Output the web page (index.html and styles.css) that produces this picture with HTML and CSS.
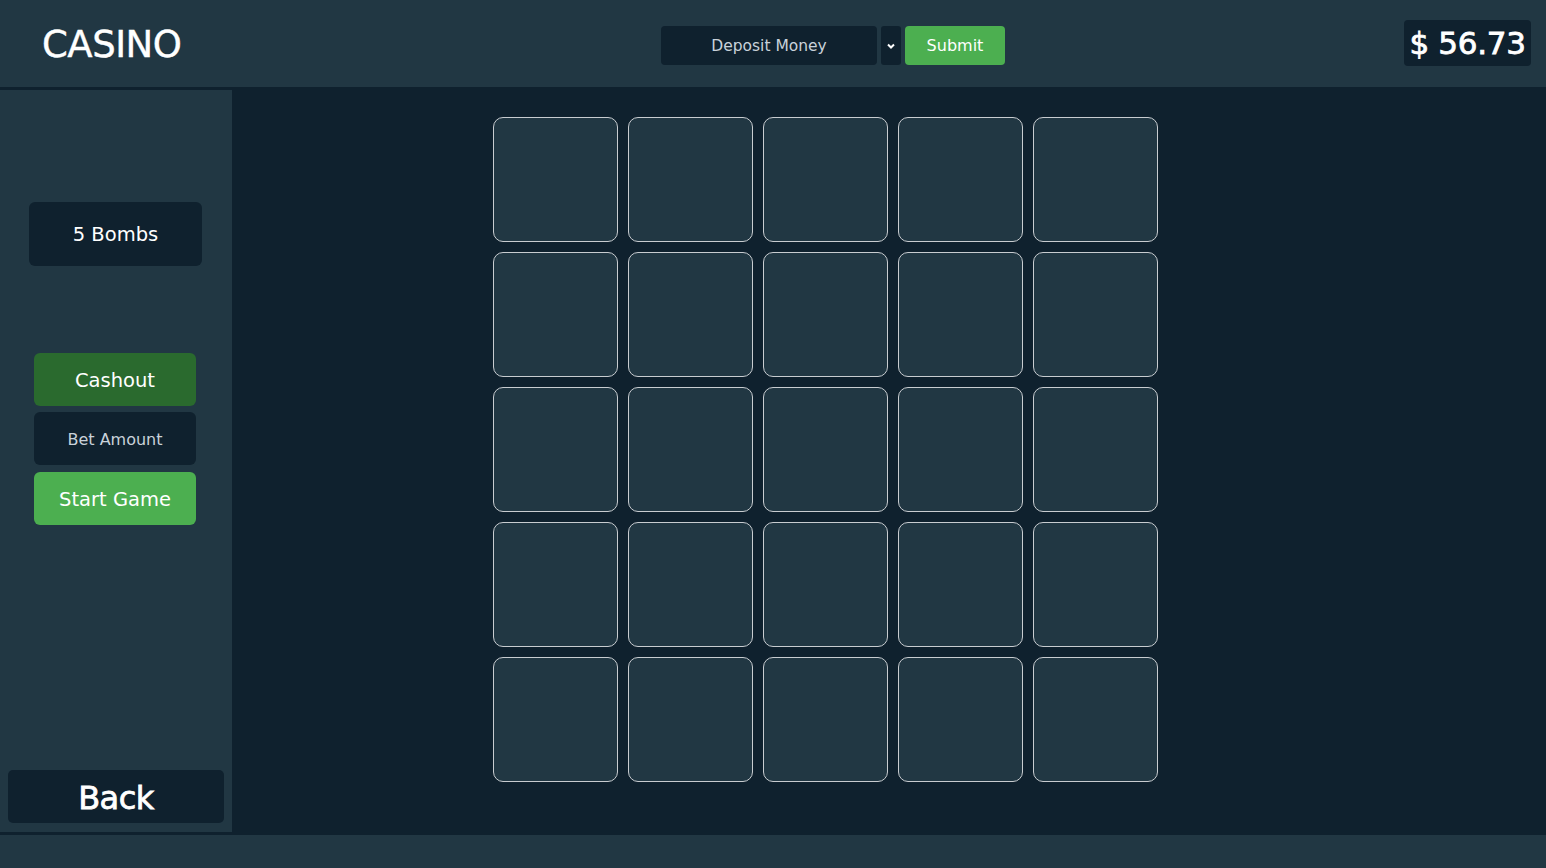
FILE: index.html
```html
<!DOCTYPE html>
<html>
	<head>
		<meta charset="UTF-8">
		<title>Casino</title>
		<link rel="stylesheet" href="styles.css">
	</head>
	<body>
		<div id="page">
			<!--顶部-->
			<div id="header">
				<div class="logo">CASINO</div>
				<div class="deposit">
					<div class="deposit-select">Deposit Money</div>
					<div class="deposit-arrow">
						<svg width="10" height="8" viewBox="0 0 10 8"><path d="M2 2.5 L5 5.5 L8 2.5" fill="none" stroke="#ffffff" stroke-width="2"/></svg>
					</div>
					<div class="btn-submit">Submit</div>
				</div>
				<div class="balance">$ 56.73</div>
			</div>

			<div id="content">
				<!--侧边栏-->
				<div id="sidebar">
					<div class="bombs">5 Bombs</div>
					<div class="actions">
						<div class="btn-side cashout">Cashout</div>
						<div class="btn-side bet">Bet Amount</div>
						<div class="btn-side start">Start Game</div>
					</div>
					<div class="back">Back</div>
				</div>

				<!--格子-->
				<div id="main">
					<ul id="grid"></ul>
				</div>
			</div>

			<div id="footer"></div>
		</div>

		<script type="text/javascript">
			var grid = document.getElementById("grid");
			var gridHTML = "";
			for(var i = 0; i < 25; i++){
				gridHTML += "<li></li>";
			}
			grid.innerHTML = gridHTML;
		</script>
	</body>
</html>
```

FILE: styles.css
```css
*{
	margin: 0;
	padding: 0;
	box-sizing: border-box;
}
li{
	list-style: none;
}
body{
	background: #0f212e;
	font-family: "DejaVu Sans", "Liberation Sans", sans-serif;
	color: #ffffff;
}
#page{
	height: 868px;
	display: flex;
	flex-direction: column;
}

/*顶部*/
#header{
	height: 87px;
	background: #213743;
	display: flex;
	align-items: center;
	padding: 0 15px 0 42px;
	margin-bottom: 3px;
}
.logo{
	width: 619px;
	font-size: 37px;
	letter-spacing: -0.5px;
	-webkit-text-stroke: 0.4px #ffffff;
	padding-top: 2px;
}
.deposit{
	display: flex;
	gap: 4px;
	height: 39px;
	margin-top: 4px;
	flex: 1;
}
.deposit-select{
	width: 216px;
	background: #0f212e;
	border-radius: 4px;
	color: #c9d2da;
	font-size: 15.5px;
	display: flex;
	align-items: center;
	justify-content: center;
}
.deposit-arrow{
	width: 20px;
	background: #0f212e;
	border-radius: 3px;
	display: flex;
	align-items: center;
	justify-content: center;
}
.btn-submit{
	width: 100px;
	background: #4caf50;
	border-radius: 4px;
	font-size: 16px;
	display: flex;
	align-items: center;
	justify-content: center;
}
.balance{
	width: 127px;
	height: 46px;
	background: #0f212e;
	border-radius: 4px;
	font-size: 31px;
	letter-spacing: -0.3px;
	-webkit-text-stroke: 0.8px #ffffff;
	display: flex;
	align-items: center;
	justify-content: center;
	margin-bottom: 2px;
}

/*侧边栏*/
#content{
	flex: 1;
	display: flex;
}
#sidebar{
	width: 232px;
	background: #213743;
	display: flex;
	flex-direction: column;
	align-items: center;
	padding: 112px 8px 9px;
}
.bombs{
	width: 173px;
	height: 64px;
	margin-right: 1px;
	background: #0f212e;
	border-radius: 6px;
	font-size: 19.5px;
	display: flex;
	align-items: center;
	justify-content: center;
}
.actions{
	margin-top: 87px;
	margin-right: 2px;
	display: flex;
	flex-direction: column;
	gap: 6px;
}
.btn-side{
	width: 162px;
	height: 53px;
	border-radius: 6px;
	font-size: 19.5px;
	padding-top: 1px;
	display: flex;
	align-items: center;
	justify-content: center;
}
.cashout{
	background: #2a6a2e;
}
.bet{
	background: #0f212e;
	color: #c9d2da;
	font-size: 16px;
}
.start{
	background: #4caf50;
	margin-top: 1px;
}
.back{
	margin-top: auto;
	width: 216px;
	height: 53px;
	background: #0f212e;
	border-radius: 5px;
	font-size: 32px;
	letter-spacing: -0.5px;
	-webkit-text-stroke: 0.8px #ffffff;
	padding-top: 2px;
	display: flex;
	align-items: center;
	justify-content: center;
}

/*格子*/
#main{
	flex: 1;
	padding: 27px 0 0 261px;
}
#grid{
	display: grid;
	grid-template-columns: repeat(5, 125px);
	grid-auto-rows: 125px;
	gap: 10px;
}
#grid li{
	background: #213743;
	border: 1px solid #c8ccd0;
	border-radius: 10px;
}

#footer{
	height: 33px;
	margin-top: 3px;
	background: #213743;
}
```
